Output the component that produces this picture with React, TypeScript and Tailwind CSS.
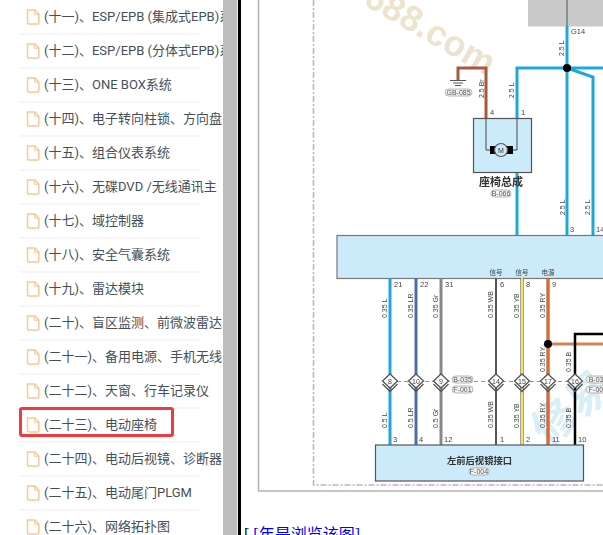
import React from 'react';

const FONT = { fontFamily: 'Roboto, "Noto Sans CJK SC", sans-serif' };
const DIAGRAM_FONT = { fontFamily: '"Liberation Sans", "Noto Sans CJK SC", sans-serif' };

const items = [
  '(十一)、ESP/EPB (集成式EPB)系统',
  '(十二)、ESP/EPB (分体式EPB)系统',
  '(十三)、ONE BOX系统',
  '(十四)、电子转向柱锁、方向盘',
  '(十五)、组合仪表系统',
  '(十六)、无碟DVD /无线通讯主',
  '(十七)、域控制器',
  '(十八)、安全气囊系统',
  '(十九)、雷达模块',
  '(二十)、盲区监测、前微波雷达',
  '(二十一)、备用电源、手机无线',
  '(二十二)、天窗、行车记录仪',
  '(二十三)、电动座椅',
  '(二十四)、电动后视镜、诊断器',
  '(二十五)、电动尾门PLGM',
  '(二十六)、网络拓扑图',
];

const FileIcon = () => (
  <svg width="14" height="16" viewBox="0 0 14 16" className="shrink-0" fill="none">
    <path d="M1.5 1h7.500l3.800 4v8.800a1.200 1.200 0 0 1-1.200 1.200H2.700a1.200 1.200 0 0 1-1.200-1.200z" stroke="#f5c998" strokeWidth="1.500" />
    <path d="M8.800 1v4.200h4" stroke="#f5c998" strokeWidth="1.100" />
  </svg>
);

const Wire = ({ x, y1, y2, c, w = 3 }: { x: number; y1: number; y2: number; c: string; w?: number }) => (
  <line x1={x} x2={x} y1={y1} y2={y2} stroke={c} strokeWidth={w} />
);

const VLabel = ({ x, y, t }: { x: number; y: number; t: string }) => (
  <text x={x} y={y} transform={`rotate(-90 ${x} ${y})`} fontSize="7" fill="#444">{t}</text>
);

const Num = ({ x, y, t }: { x: number; y: number; t: string }) => (
  <text x={x} y={y} fontSize="7.500" fill="#444">{t}</text>
);

const Diamond = ({ x, y, t }: { x: number; y: number; t: string }) => (
  <g>
    <path d={`M${x - 7.5} ${y + 3}L${x} ${y + 10.5}L${x + 7.5} ${y + 3}`} fill="none" stroke="#555" strokeWidth="1.300" />
    <path d={`M${x} ${y - 7}L${x + 7.5} ${y}L${x} ${y + 7}L${x - 7.5} ${y}z`} fill="#fff" stroke="#555" strokeWidth="1.300" />
    <text x={x} y={y + 2.5} fontSize="7" fill="#444" textAnchor="middle">{t}</text>
  </g>
);

const Tag = ({ x, y, w, t, h = 7 }: { x: number; y: number; w: number; t: string; h?: number }) => (
  <g>
    <rect x={x} y={y} width={w} height={h} rx={h / 2} fill="#f4f4f4" stroke="#999" strokeWidth="0.700" />
    <text x={x + w / 2} y={y + h - 1} fontSize="7" fill="#555" textAnchor="middle">{t}</text>
  </g>
);

// the wiring diagram, origin at x=241 of the page
const Diagram = () => (
  <svg width="362" height="495" viewBox="241 0 362 495" className="block blur-[0.4px]" style={DIAGRAM_FONT}>
    <defs>
      <linearGradient id="mark" x1="0" y1="0" x2="1" y2="1">
        <stop offset="0%" stopColor="#efe4c6" />
        <stop offset="55%" stopColor="#ebe5cf" />
        <stop offset="100%" stopColor="#ecdcd6" />
      </linearGradient>
    </defs>

    {/* page frame */}
    <path d="M258.500 0V491H603" fill="none" stroke="#b4b4b4" strokeWidth="1.500" />
    <path d="M313.500 0V485H603" fill="none" stroke="#c8aac8" strokeWidth="1.500" strokeDasharray="6 2 2 2" />

    {/* watermark */}
    <text x="362" y="4" fontSize="36" fontWeight="700" fill="url(#mark)" transform="rotate(30 362 4)">688.com</text>
    <text x="548" y="448" fontSize="44" fontWeight="700" fill="#d9eef7" transform="rotate(-40 548 448)">修易</text>

    {/* top fuse block */}
    <rect x="528" y="0" width="75" height="26.500" fill="#c9c9c9" />
    <Wire x={567} y1={0} y2={26} c="#666" w={1.200} />
    <Wire x={567} y1={26} y2={236} c="#1ea7dd" />
    <Num x={571} y={34} t="G14" />
    <VLabel x={564} y={56} t="2.5 L" />
    <path d="M517 236V68H603" fill="none" stroke="#1ea7dd" strokeWidth="3" />
    <path d="M567 68L593 77V236" fill="none" stroke="#1ea7dd" strokeWidth="3" />
    <circle cx="567" cy="68" r="4" fill="#000" />

    {/* ground branch */}
    <path d="M486 119V68H458V80" fill="none" stroke="#a9583a" strokeWidth="3" />
    <line x1="450" x2="466" y1="80.500" y2="80.500" stroke="#555" />
    <line x1="453" x2="463" y1="83" y2="83" stroke="#555" />
    <line x1="455" x2="461" y1="85.500" y2="85.500" stroke="#555" />
    <Tag x={445} y={89} w={27} t="GB-085" />
    <VLabel x={484} y={98} t="2.5 Br" />
    <VLabel x={514} y={98} t="2.5 L" />
    <Num x={490} y={115} t="4" />
    <Num x={521} y={115} t="1" />

    {/* seat motor */}
    <rect x="473.500" y="118.500" width="58" height="54" fill="#cbeafa" stroke="#555" strokeWidth="1.200" />
    <path d="M486 119V150H492M517 119V150H511" fill="none" stroke="#444" />
    <rect x="490" y="146" width="6" height="8" fill="#000" />
    <rect x="507" y="146" width="6" height="8" fill="#000" />
    <circle cx="501" cy="150" r="6.500" fill="#cbeafa" stroke="#555" strokeWidth="1.200" />
    <text x="501" y="152.500" fontSize="7" fill="#333" textAnchor="middle">M</text>
    <text x="501" y="186" fontSize="11" fontWeight="700" fill="#333" textAnchor="middle">座椅总成</text>
    <Tag x={491} y={190} w={20} t="B-066" />

    <VLabel x={565} y={215} t="2.5 L" />
    <VLabel x={590} y={215} t="2.5 L" />
    <Num x={570} y={232} t="3" />
    <Num x={596} y={232} t="14" />

    {/* control unit */}
    <rect x="337" y="235.500" width="270" height="43" fill="#cbeafa" stroke="#777" strokeWidth="1.200" />
    <g fontSize="6.500" fill="#444" textAnchor="middle">
      <text x="496" y="275">信号</text>
      <text x="522" y="275">信号</text>
      <text x="548" y="275">电源</text>
    </g>

    {/* wires to the connector */}
    <Wire x={390} y1={278} y2={445} c="#1ea7dd" />
    <Wire x={416} y1={278} y2={445} c="#4a6ea8" />
    <Wire x={441} y1={278} y2={445} c="#888" />
    <Wire x={496} y1={278} y2={445} c="#555" w={2} />
    <Wire x={522} y1={278} y2={445} c="#444" />
    <Wire x={522} y1={278} y2={445} c="#f8e25e" w={2} />
    <Wire x={548} y1={278} y2={445} c="#7a3a20" />
    <Wire x={548} y1={278} y2={445} c="#ee6420" w={2} />
    <path d="M548 344H603" fill="none" stroke="#cf8655" strokeWidth="3" />
    <path d="M575 445V334H603" fill="none" stroke="#000" strokeWidth="2.500" />
    <circle cx="548" cy="344" r="4" fill="#000" />

    <VLabel x={387} y={318} t="0.35 L" />
    <VLabel x={413} y={318} t="0.35 LR" />
    <VLabel x={438} y={318} t="0.35 Gr" />
    <VLabel x={493} y={318} t="0.35 WB" />
    <VLabel x={519} y={318} t="0.35 YB" />
    <VLabel x={545} y={318} t="0.35 RY" />
    <VLabel x={545} y={372} t="0.35 RY" />
    <VLabel x={571} y={372} t="0.35 B" />
    <Num x={394} y={287} t="21" />
    <Num x={420} y={287} t="22" />
    <Num x={445} y={287} t="31" />
    <Num x={500} y={287} t="6" />
    <Num x={526} y={287} t="8" />
    <Num x={552} y={287} t="9" />

    {/* inline connectors */}
    <line x1="390" x2="575" y1="381.500" y2="381.500" stroke="#777" strokeDasharray="4 3" strokeWidth="0.800" />
    <Diamond x={390} y={381} t="8" />
    <Diamond x={416} y={381} t="10" />
    <Diamond x={441} y={381} t="9" />
    <Diamond x={496} y={381} t="14" />
    <Diamond x={522} y={381} t="15" />
    <Diamond x={548} y={381} t="17" />
    <Diamond x={575} y={381} t="16" />
    <Tag x={452} y={376} w={21} t="B-035" />
    <Tag x={452} y={386} w={21} t="F-001" />
    <Tag x={586} y={376} w={24} t="B-034" />
    <Tag x={586} y={386} w={24} t="F-001" />

    <VLabel x={387} y={428} t="0.5 L" />
    <VLabel x={413} y={428} t="0.5 LR" />
    <VLabel x={438} y={428} t="0.5 Gr" />
    <VLabel x={493} y={428} t="0.35 WB" />
    <VLabel x={519} y={428} t="0.35 YB" />
    <VLabel x={545} y={428} t="0.35 RY" />
    <VLabel x={571} y={428} t="0.35 B" />
    <Num x={393} y={442} t="3" />
    <Num x={419} y={442} t="4" />
    <Num x={444} y={442} t="12" />
    <Num x={500} y={442} t="1" />
    <Num x={526} y={442} t="2" />
    <Num x={552} y={442} t="11" />
    <Num x={578} y={442} t="10" />

    {/* mirror connector */}
    <rect x="375.500" y="445" width="208" height="36" fill="#cbeafa" stroke="#555" strokeWidth="1.200" />
    <text x="479.500" y="463.500" fontSize="9.300" fontWeight="700" fill="#333" textAnchor="middle">左前后视镜接口</text>
    <Tag x={469} y={468} w={20} t="F-004" />
  </svg>
);

export default function App() {
  return (
    <div className="flex h-[535px] w-[603px] overflow-hidden bg-white" style={FONT}>
      {/* directory list */}
      <div className="mt-[1px] w-[223px] shrink-0 overflow-hidden pl-5">
        <ul className="w-[180px]">
          {items.map((t, i) => (
            <li key={t} className="relative flex h-[34px] items-center border-b-2 border-[#f6f6f6] pl-1.5">
              <FileIcon />
              <span className="ml-1 whitespace-nowrap text-[13px] text-[#444f5a]">{t}</span>
              {i === 12 && (
                <span className="absolute -left-[1px] -top-[2px] h-[30px] w-[155px] rounded-[3px] border-[3px] border-[#ef3b3f]" />
              )}
            </li>
          ))}
        </ul>
      </div>
      {/* scrollbar */}
      <div className="w-[14px] shrink-0 bg-[#bdbdbd]" />
      <div className="w-[1px] shrink-0 bg-[#e8e8e8]" />
      <div className="w-[3px] shrink-0 bg-black" />
      {/* article */}
      <div className="relative z-10 min-w-0 flex-1 bg-white">
        <Diagram />
        <div className="mt-[30px] whitespace-nowrap pl-[3px] text-[16px] leading-5 text-black" style={{ fontFamily: '"Liberation Serif", "Noto Sans CJK SC", serif' }}>
          [ <span className="text-[#0000ee] underline">[年是浏览该图]</span>
        </div>
      </div>
    </div>
  );
}
